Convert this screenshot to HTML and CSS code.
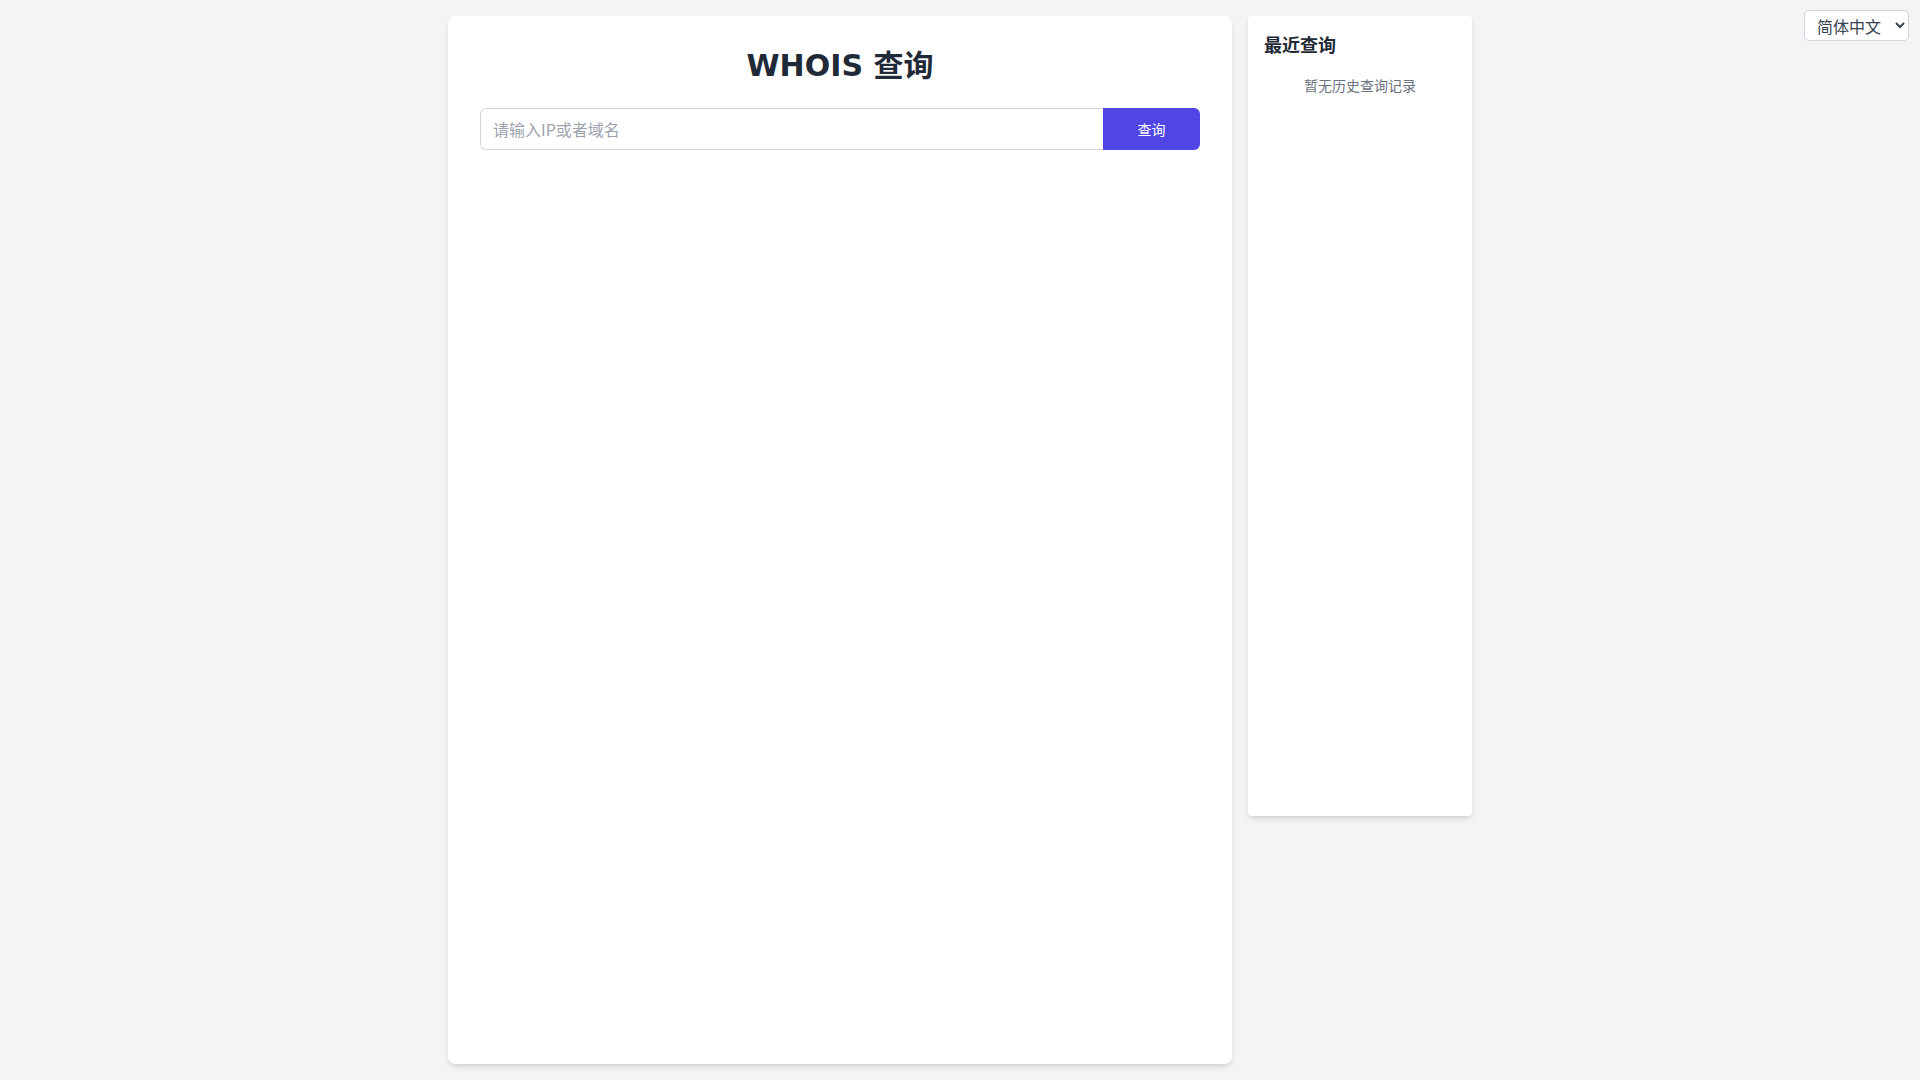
FILE: index.html
```html
<!DOCTYPE html>
<html lang="zh-CN">
<head>
<meta charset="utf-8">
<title>WHOIS 查询</title>
<link rel="stylesheet" href="styles.css">
</head>
<body>
<div class="layout">
  <main class="card main">
    <h1 class="title">WHOIS 查询</h1>
    <form class="search" onsubmit="return false;">
      <input class="search-input" type="text" placeholder="请输入IP或者域名">
      <button class="search-btn" type="submit">查询</button>
    </form>
  </main>
  <aside class="card side">
    <h2 class="side-title">最近查询</h2>
    <p class="side-empty">暂无历史查询记录</p>
  </aside>
</div>
<select class="lang">
  <option>简体中文</option>
  <option>English</option>
</select>
</body>
</html>
```
FILE: styles.css
```css
* { box-sizing: border-box; }
html, body { margin: 0; padding: 0; }
body {
  background: #f3f4f6;
  font-family: "DejaVu Sans", "Noto Sans CJK SC", sans-serif;
  color: #1f2937;
}
.layout {
  width: 1024px;
  margin: 0 auto;
  padding: 16px 0;
  display: flex;
  gap: 16px;
  align-items: flex-start;
}
.card {
  background: #ffffff;
  border-radius: 8px;
  box-shadow: 0 4px 6px -1px rgba(0,0,0,0.1), 0 2px 4px -2px rgba(0,0,0,0.1);
}
.main {
  flex: 1;
  height: 1048px;
  padding: 32px;
}
.title {
  margin: 0 0 24px;
  font-size: 30px;
  line-height: 36px;
  font-weight: 700;
  text-align: center;
  color: #1f2937;
}
.search {
  display: flex;
  margin: 0;
}
.search-input {
  flex: 1;
  min-width: 0;
  height: 42px;
  padding: 0 12px;
  border: 1px solid #d1d5db;
  border-right: none;
  border-radius: 6px 0 0 6px;
  font-family: "Noto Sans CJK SC", sans-serif;
  font-size: 16px;
  color: #1f2937;
  outline: none;
}
.search-input::placeholder { color: #9ca3af; }
.search-btn {
  width: 97px;
  height: 42px;
  border: none;
  border-radius: 0 6px 6px 0;
  background: #4f46e5;
  color: #ffffff;
  font-family: "Noto Sans CJK SC", sans-serif;
  font-size: 14px;
  cursor: pointer;
}
.side {
  width: 224px;
  height: 800px;
  padding: 16px;
  border-radius: 4px;
}
.side-title {
  margin: 0;
  font-size: 18px;
  line-height: 28px;
  font-weight: 700;
  color: #1f2937;
}
.side-empty {
  margin: 0;
  padding: 16px 0;
  font-size: 14px;
  line-height: 20px;
  text-align: center;
  color: #6b7280;
}
.lang {
  position: fixed;
  top: 10px;
  right: 11px;
  width: 105px;
  height: 31px;
  padding: 0 4px 0 8px;
  border: 1px solid #d1d5db;
  border-radius: 5px;
  background: #ffffff;
  font-family: "Noto Sans CJK SC", sans-serif;
  font-size: 16px;
  color: #374151;
}
```
